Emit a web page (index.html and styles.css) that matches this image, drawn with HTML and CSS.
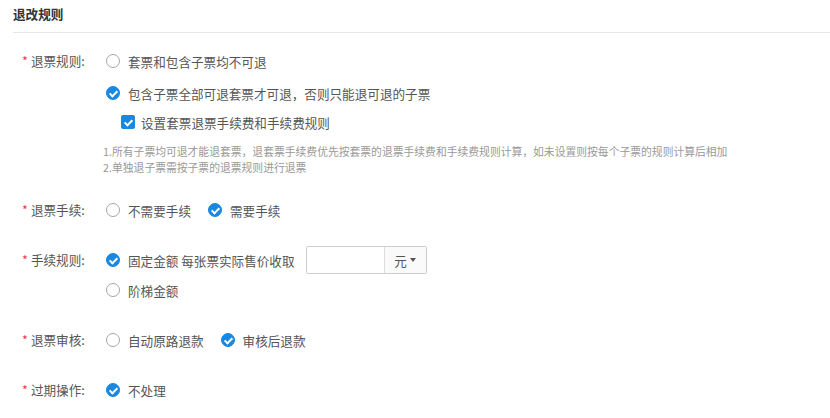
FILE: index.html
```html
<!DOCTYPE html>
<html lang="zh-CN">
<head>
  <meta charset="UTF-8">
  <title>退改规则</title>
  <link rel="stylesheet" href="styles.css">
</head>
<body>
  <div class="panel">
    <div class="panel-header">
      <h3>退改规则</h3>
    </div>

    <div class="form">
      <div class="form-row">
        <div class="form-label"><span class="required">*</span>退票规则:</div>
        <div class="form-control">
          <div class="options">
            <label class="option"><span class="radio"></span>套票和包含子票均不可退</label>
            <label class="option"><span class="radio checked"></span>包含子票全部可退套票才可退，否则只能退可退的子票</label>
            <label class="option sub-option"><span class="checkbox checked"></span>设置套票退票手续费和手续费规则</label>
          </div>
          <div class="hint">
            <p>1.所有子票均可退才能退套票，退套票手续费优先按套票的退票手续费和手续费规则计算，如未设置则按每个子票的规则计算后相加</p>
            <p>2.单独退子票需按子票的退票规则进行退票</p>
          </div>
        </div>
      </div>

      <div class="form-row">
        <div class="form-label"><span class="required">*</span>退票手续:</div>
        <div class="form-control inline">
          <label class="option"><span class="radio"></span>不需要手续</label>
          <label class="option"><span class="radio checked"></span>需要手续</label>
        </div>
      </div>

      <div class="form-row">
        <div class="form-label"><span class="required">*</span>手续规则:</div>
        <div class="form-control">
          <div class="options tight">
            <div class="option">
              <span class="radio checked"></span>固定金额 每张票实际售价收取
              <div class="input-group">
                <input type="text" class="input">
                <span class="addon">元<i class="caret"></i></span>
              </div>
            </div>
            <label class="option"><span class="radio"></span>阶梯金额</label>
          </div>
        </div>
      </div>

      <div class="form-row">
        <div class="form-label"><span class="required">*</span>退票审核:</div>
        <div class="form-control inline">
          <label class="option"><span class="radio"></span>自动原路退款</label>
          <label class="option"><span class="radio checked"></span>审核后退款</label>
        </div>
      </div>

      <div class="form-row">
        <div class="form-label"><span class="required">*</span>过期操作:</div>
        <div class="form-control inline">
          <label class="option"><span class="radio checked"></span>不处理</label>
        </div>
      </div>
    </div>
  </div>
</body>
</html>
```

FILE: styles.css
```css
* {
  margin: 0;
  padding: 0;
  box-sizing: border-box;
}

:root {
  --primary: #1a88e0;
  --text: #555555;
  --text-dark: #333333;
  --muted: #999999;
  --border: #cccccc;
  --line: #e6e6e6;
  --danger: #f0364f;
}

body {
  font-family: "Noto Sans CJK SC", "Noto Sans", sans-serif;
  font-size: 12.6px;
  color: var(--text);
  background: #ffffff;
  width: 830px;
  height: 418px;
  overflow: hidden;
}

.panel {
  padding-left: 13px;
}

.panel-header {
  height: 33px;
  border-bottom: 1px solid var(--line);
}

.panel-header h3 {
  font-size: 12.6px;
  font-weight: bold;
  color: var(--text-dark);
  line-height: 28px;
}

.form {
  padding: 13px 0 0 9px;
}

.form-row {
  display: flex;
  margin-bottom: 20px;
}

.form-label {
  width: 84px;
  flex-shrink: 0;
  height: 30px;
  line-height: 30px;
  color: var(--text);
}

.required {
  color: var(--danger);
  margin-right: 3px;
}

.form-control.inline {
  display: flex;
}

.options {
  display: flex;
  flex-direction: column;
  gap: 2px;
}

.options.tight {
  gap: 0;
}

.option {
  display: flex;
  align-items: center;
  height: 30px;
  margin-right: 17px;
  white-space: nowrap;
}

.sub-option {
  height: 24px;
  padding-left: 15px;
}

.radio {
  width: 14px;
  height: 14px;
  border: 1px solid #a6a6a6;
  border-radius: 50%;
  margin-right: 8px;
  flex-shrink: 0;
  position: relative;
}

.radio.checked,
.checkbox.checked {
  background: var(--primary);
  border-color: var(--primary);
}

.radio.checked::after,
.checkbox.checked::after {
  content: '';
  position: absolute;
  left: 4px;
  top: 2px;
  width: 3px;
  height: 6px;
  border: solid #ffffff;
  border-width: 0 2px 2px 0;
  transform: rotate(45deg);
}

.checkbox {
  width: 14px;
  height: 14px;
  border: 1px solid #a6a6a6;
  border-radius: 2px;
  margin-right: 6px;
  flex-shrink: 0;
  position: relative;
}

.hint {
  margin-top: 9px;
  margin-left: -3px;
  font-size: 10.8px;
  line-height: 16px;
  color: var(--muted);
}

.input-group {
  display: flex;
  height: 28px;
  margin-left: 11px;
  border: 1px solid var(--border);
  border-radius: 2px;
}

.input {
  width: 77px;
  border: none;
  outline: none;
  padding: 0 6px;
  font-family: inherit;
  font-size: inherit;
  color: var(--text);
}

.addon {
  width: 42px;
  display: flex;
  align-items: center;
  justify-content: center;
  gap: 3px;
  border-left: 1px solid #dddddd;
  background: #fafafa;
  color: var(--text);
}

.caret {
  width: 0;
  height: 0;
  border-left: 3.5px solid transparent;
  border-right: 3.5px solid transparent;
  border-top: 4px solid #555555;
}
```
